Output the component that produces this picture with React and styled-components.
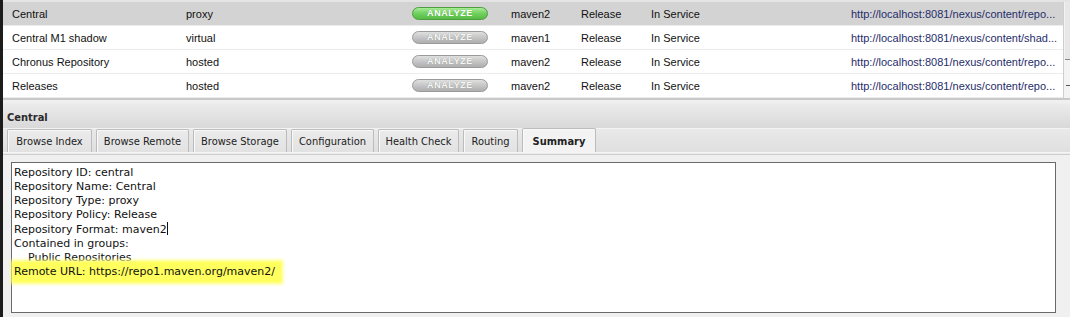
import React from "react";
import styled, { createGlobalStyle } from "styled-components";

const Global = createGlobalStyle`
  html, body { margin: 0; padding: 0; background: #f0f0f0; }
  body { width: 1070px; height: 317px; overflow: hidden; }
`;

const Page = styled.div`
  display: flex;
  width: 1070px;
  height: 317px;
  overflow: hidden;
`;

const LeftStrip = styled.div`
  width: 3px;
  flex: none;
  background: #1c1c1c;
`;

const Main = styled.div`
  flex: 1;
  display: flex;
  flex-direction: column;
  min-width: 0;
`;

const GridArea = styled.div`
  display: flex;
  border-top: 2px solid #e4e4e4;
  border-bottom: 2px solid #c9c9c9;
`;

const Table = styled.div`
  flex: 1;
  display: flex;
  flex-direction: column;
`;

const Scrollbar = styled.div`
  width: 6px;
  flex: none;
  background: #f3f3f3;
  border-left: 1px solid #cfcfcf;
  position: relative;
`;

const ScrollThumb = styled.div`
  position: absolute;
  left: 1px;
  right: 0;
  top: 0;
  height: 57px;
  background: #e7e7e7;
  border-bottom: 1px solid #8a8a8a;
`;

const ScrollArrow = styled.div`
  position: absolute;
  left: 2px;
  bottom: 12px;
  width: 4px;
  height: 1px;
  background: #555;
`;

const Row = styled.div`
  display: grid;
  grid-template-columns: 174px 226px 99px 70px 70px 209px 1fr;
  align-items: center;
  height: 23px;
  border-bottom: 1px solid #ececec;
  background: ${(p) => (p.$selected ? "#d3d3d3" : "#ffffff")};
  font-family: "Liberation Sans", Arial, sans-serif;
  font-size: 11px;
  color: #111;
`;

const Cell = styled.div`
  padding-left: 9px;
  white-space: nowrap;
  overflow: hidden;
`;

const UrlCell = styled(Cell)`
  color: #1f2d6b;
  padding-left: 0;
`;

const AnalyzeButton = styled.div`
  margin-left: 9px;
  width: 74px;
  height: 11px;
  border-radius: 7px;
  border: 1px solid ${(p) => (p.$active ? "#4d9c3f" : "#9a9a9a")};
  background: ${(p) =>
    p.$active
      ? "linear-gradient(#a9ec98 0%, #74d262 45%, #55bb43 100%)"
      : "linear-gradient(#e0e0e0 0%, #c8c8c8 45%, #aeaeae 100%)"};
  color: ${(p) => (p.$active ? "#ffffff" : "#f6f6f6")};
  text-shadow: ${(p) => (p.$active ? "0 0 1px #5cae4c" : "0 0 1px #8e8e8e")};
  font-family: "Liberation Sans", Arial, sans-serif;
  font-weight: bold;
  font-size: 9px;
  letter-spacing: 0.6px;
  line-height: 11px;
  text-align: center;
`;

const PanelHeader = styled.div`
  box-sizing: border-box;
  height: 28px;
  display: flex;
  align-items: center;
  padding: 6px 0 0 4px;
  background: linear-gradient(#f0f0f0 0px, #f0f0f0 3px, #ebebeb 4px, #d9d9d9 100%);
  font-family: "DejaVu Sans Condensed", "DejaVu Sans", sans-serif;
  font-weight: bold;
  font-size: 11px;
  color: #2a2a2a;
`;

const TabStrip = styled.div`
  display: flex;
  align-items: flex-end;
  gap: 4px;
  height: 24px;
  padding-left: 4px;
  background: linear-gradient(#e9e9e9, #dfdfdf);
  border-top: 1px solid #f3f3f3;
  box-sizing: border-box;
`;

const TabRule = styled.div`
  height: 3px;
  box-sizing: border-box;
  background: #ececec;
  border-top: 1px solid #f5f5f5;
  border-bottom: 1px solid #cdcdcd;
`;

const Tab = styled.div`
  box-sizing: border-box;
  width: ${(p) => p.$w}px;
  height: ${(p) => (p.$active ? "24px" : "23px")};
  display: flex;
  align-items: center;
  justify-content: center;
  border: 1px solid #bcbcbc;
  border-bottom: none;
  border-radius: 2px 2px 0 0;
  background: ${(p) => (p.$active ? "#f3f3f3" : "linear-gradient(#ebebeb, #e2e2e2)")};
  box-shadow: inset 1px 1px 0 #f9f9f9;
  font-family: "DejaVu Sans Condensed", "DejaVu Sans", sans-serif;
  font-size: 11px;
  font-weight: ${(p) => (p.$active ? "bold" : "normal")};
  color: #222;
  padding-top: 1px;
`;

const Body = styled.div`
  flex: 1;
  padding: 7px 14px 0 8px;
  background: #f0f0f0;
`;

const TextBox = styled.div`
  height: 146px;
  border: 1px solid #6a6a6a;
  background: #fff;
  padding: 3px 0 0 2px;
  font-family: "DejaVu Sans", sans-serif;
  font-size: 11px;
  line-height: 14px;
  color: #111;
`;

const Line = styled.div`
  white-space: pre;
`;

const Highlight = styled.span`
  display: inline-block;
  background: #ffff5e;
  box-shadow: 0 0 3px 2px #ffff70;
  padding: 3px 6px 3px 1px;
  margin: -3px 0 -3px -1px;
`;

const Caret = styled.span`
  display: inline-block;
  width: 1px;
  height: 13px;
  background: #111;
  vertical-align: -2px;
`;

const rows = [
  ["Central", "proxy", true, "maven2", "http://localhost:8081/nexus/content/repo..."],
  ["Central M1 shadow", "virtual", false, "maven1", "http://localhost:8081/nexus/content/shad..."],
  ["Chronus Repository", "hosted", false, "maven2", "http://localhost:8081/nexus/content/repo..."],
  ["Releases", "hosted", false, "maven2", "http://localhost:8081/nexus/content/repo..."],
];

const tabs = [
  ["Browse Index", 85],
  ["Browse Remote", 93],
  ["Browse Storage", 94],
  ["Configuration", 83],
  ["Health Check", 81],
  ["Routing", 55],
  ["Summary", 74],
];

export default function App() {
  return (
    <>
      <Global />
      <Page>
        <LeftStrip />
        <Main>
          <GridArea>
            <Table>
              {rows.map(([name, type, active, fmt, url], i) => (
                <Row key={name} $selected={i === 0}>
                  <Cell>{name}</Cell>
                  <Cell>{type}</Cell>
                  <AnalyzeButton $active={active}>ANALYZE</AnalyzeButton>
                  <Cell>{fmt}</Cell>
                  <Cell>Release</Cell>
                  <Cell>In Service</Cell>
                  <UrlCell>{url}</UrlCell>
                </Row>
              ))}
            </Table>
            <Scrollbar>
              <ScrollThumb />
              <ScrollArrow />
            </Scrollbar>
          </GridArea>
          <PanelHeader>Central</PanelHeader>
          <TabStrip>
            {tabs.map(([t, w]) => (
              <Tab key={t} $w={w} $active={t === "Summary"}>
                {t}
              </Tab>
            ))}
          </TabStrip>
          <TabRule />
          <Body>
            <TextBox>
              <Line>Repository ID: central</Line>
              <Line>Repository Name: Central</Line>
              <Line>Repository Type: proxy</Line>
              <Line>Repository Policy: Release</Line>
              <Line>
                Repository Format: maven2<Caret />
              </Line>
              <Line>Contained in groups:</Line>
              <Line>{"    Public Repositories"}</Line>
              <Line>
                <Highlight>Remote URL: https://repo1.maven.org/maven2/</Highlight>
              </Line>
            </TextBox>
          </Body>
        </Main>
      </Page>
    </>
  );
}
